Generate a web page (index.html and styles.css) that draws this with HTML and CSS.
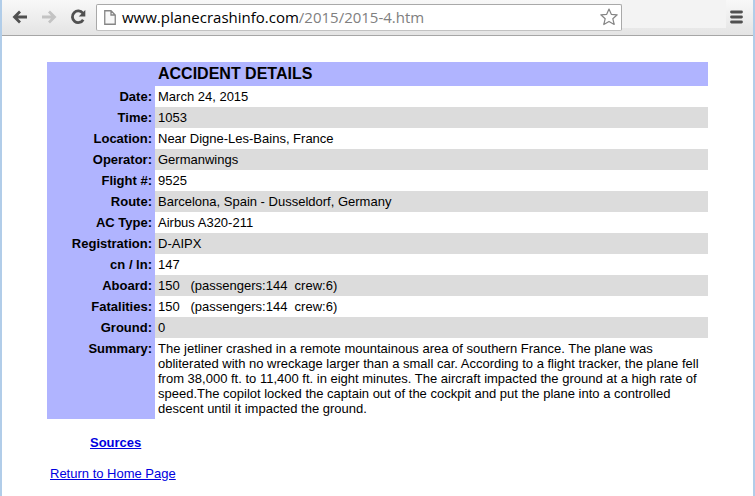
FILE: index.html
```html
<!DOCTYPE html>
<html lang="en">
<head>
<meta charset="utf-8">
<title>Accident Details</title>
<link rel="stylesheet" href="styles.css">
</head>
<body>
<div class="window">
  <header class="toolbar">
    <svg class="icon back" width="16" height="14" viewBox="0 0 16 14"><path d="M8 1.5 2.5 7 8 12.5M3 7H15"/></svg>
    <svg class="icon forward" width="16" height="14" viewBox="0 0 16 14"><path d="M8 1.5 13.5 7 8 12.5M13 7H1"/></svg>
    <svg class="icon reload" width="16" height="16" viewBox="0 0 16 16"><path d="M12.8 4.2A5.8 5.8 0 1 0 13.2 10.7"/><path class="head" d="M15.3 1V7.6H8.7Z"/></svg>
    <div class="address">
      <svg class="page" width="12" height="15" viewBox="0 0 12 15"><path d="M.75.75H7L11.25 5V14.25H.75ZM7 .75V5H11.25"/></svg>
      <span class="url">www.planecrashinfo.com<span class="path">/2015/2015-4.htm</span></span>
      <svg class="star" width="18" height="18" viewBox="0 0 18 18"><path d="M9 1 11.3 6.3 17.2 6.8 12.8 10.7 14.2 16.5 9 13.4 3.8 16.5 5.2 10.7.8 6.8 6.7 6.3Z"/></svg>
    </div>
    <div class="extensions"></div>
    <svg class="menu" width="13" height="14" viewBox="0 0 13 14"><path d="M1.5 2H11.5M1.5 7H11.5M1.5 12H11.5"/></svg>
  </header>
  <main class="content">
    <table class="details">
      <tr class="title"><th></th><td>ACCIDENT DETAILS</td></tr>
      <tr><th>Date:</th><td>March 24, 2015</td></tr>
      <tr><th>Time:</th><td>1053</td></tr>
      <tr><th>Location:</th><td>Near Digne-Les-Bains, France</td></tr>
      <tr><th>Operator:</th><td>Germanwings</td></tr>
      <tr><th>Flight #:</th><td>9525</td></tr>
      <tr><th>Route:</th><td>Barcelona, Spain - Dusseldorf, Germany</td></tr>
      <tr><th>AC Type:</th><td>Airbus A320-211</td></tr>
      <tr><th>Registration:</th><td>D-AIPX</td></tr>
      <tr><th>cn / ln:</th><td>147</td></tr>
      <tr><th>Aboard:</th><td>150 &nbsp; (passengers:144&nbsp; crew:6)</td></tr>
      <tr><th>Fatalities:</th><td>150 &nbsp; (passengers:144&nbsp; crew:6)</td></tr>
      <tr><th>Ground:</th><td>0</td></tr>
      <tr><th>Summary:</th><td class="summary">The jetliner crashed in a remote mountainous area of southern France. The plane was<br>obliterated with no wreckage larger than a small car. According to a flight tracker, the plane fell<br>from 38,000 ft. to 11,400 ft. in eight minutes. The aircraft impacted the ground at a high rate of<br>speed.The copilot locked the captain out of the cockpit and put the plane into a controlled<br>descent until it impacted the ground.</td></tr>
    </table>
    <p class="sources"><a href="#">Sources</a></p>
    <p class="home"><a href="#">Return to Home Page</a></p>
  </main>
</div>
</body>
</html>
```
FILE: styles.css
```css
* { box-sizing: border-box; }
body {
  margin: 0;
  overflow: hidden;
  background: #fff;
  font-family: "Liberation Sans", Arial, sans-serif;
  color: #000;
}
.window {
  height: 496px;
  border-left: 2px solid #b1cde9;
  border-right: 2px solid #b1cde9;
}
.toolbar {
  height: 36px;
  display: flex;
  align-items: center;
  padding: 0 10px 1px;
  background: linear-gradient(#f8f8f8, #e4e4e4);
  border-bottom: 1px solid #a6a6a6;
}
.icon { flex: none; fill: none; stroke: #505050; stroke-width: 2.8; }
.forward { margin-left: 13px; stroke: #c3c3c3; }
.reload { margin-left: 13px; }
.reload .head { fill: #505050; stroke: none; }
.address {
  flex: none;
  width: 526px;
  height: 27px;
  margin-left: 10px;
  padding: 0 3px 0 7px;
  display: flex;
  align-items: center;
  background: #fff;
  border: 1px solid #a9a9a9;
  border-bottom-color: #c2c2c2;
  border-radius: 2px;
}
.page { flex: none; fill: #f8f8f8; stroke: #858585; stroke-width: 1.3; }
.url {
  margin-left: 6px;
  font: 15px/24px "Open Sans", "Noto Sans", sans-serif;
  white-space: nowrap;
}
.path { color: #808080; }
.star { margin-left: auto; flex: none; fill: #fff; stroke: #858585; stroke-width: 1.2; stroke-linejoin: round; }
.extensions { width: 104px; height: 28px; background: #f3f3f3; align-self: flex-start; }
.menu { flex: none; margin-left: 4px; stroke: #505050; stroke-width: 2.8; stroke-linecap: round; }
.content { padding: 26px 45px 0; font-size: 13px; line-height: 15px; }
.details { width: 661px; table-layout: fixed; border-collapse: collapse; }
.details th, .details td { padding: 3px; vertical-align: top; white-space: nowrap; }
.details th { width: 108px; background: #b0b4ff; text-align: right; }
.details tr:nth-child(odd) td { background: #dcdcdc; }
.details tr.title td {
  background: #b0b4ff;
  font-size: 16px;
  font-weight: bold;
  line-height: 18px;
}
.sources { margin: 16px 0 0 43px; font-weight: bold; }
.home { margin: 16px 0 0 3px; }
a { color: #0000e0; text-decoration: underline; }
```
